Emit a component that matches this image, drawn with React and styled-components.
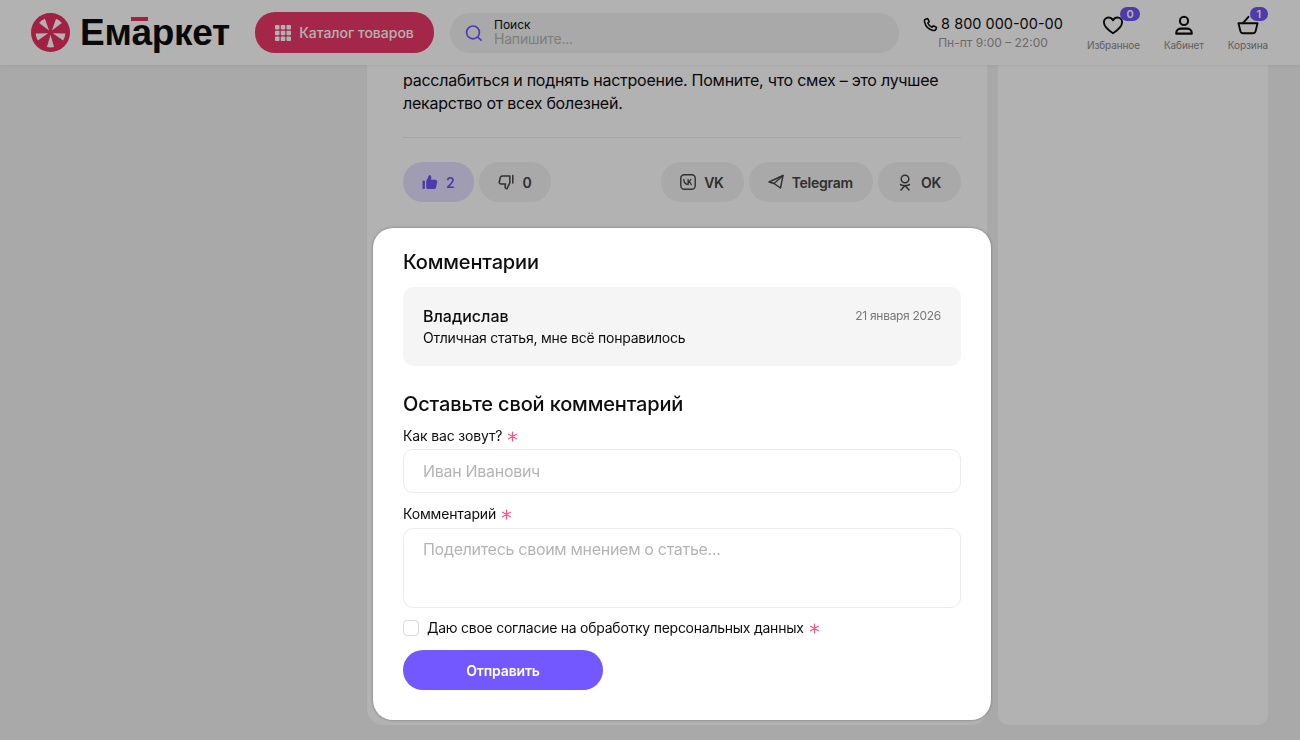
import styled, { createGlobalStyle } from "styled-components"
import { Fragment } from "react"

const Global = createGlobalStyle`
  * { box-sizing: border-box; }
  html, body { margin: 0; height: 100%; overflow: hidden; }
  body {
    background: #f2f2f2;
    color: #0d0d0d;
    font-family: Inter, "Noto Sans", sans-serif;
  }
`

const Page = styled.div`
  position: relative;
  width: 1300px;
  height: 740px;
  overflow: hidden;
`
const Header = styled.header`
  height: 65px;
  background: #fff;
  display: flex;
  align-items: center;
  padding: 0 32px 0 31px;
  box-shadow: 0 1px 4px rgba(0, 0, 0, 0.06);
  position: relative;
  z-index: 2;
`
const Logo = styled.div`
  display: flex;
  align-items: center;
  gap: 10px;
  width: 224px;
  flex: none;
`
const LogoText = styled.span`
  font-family: "Liberation Sans", Arial, sans-serif;
  font-size: 37px;
  font-weight: 700;
  letter-spacing: -0.3px;
  line-height: 40px;
  color: #0d0d0d;
`
const LogoA = styled.span`
  position: relative;
  &::before {
    content: "";
    position: absolute;
    left: 0;
    right: 4px;
    top: 5px;
    height: 4px;
    background: #e8305f;
  }
`
const Catalog = styled.button`
  width: 179px;
  height: 41px;
  flex: none;
  border: 0;
  border-radius: 20px;
  background: #eb3869;
  color: #fff;
  display: flex;
  align-items: center;
  justify-content: center;
  gap: 8px;
  font: 500 14px Inter, sans-serif;
`
const Search = styled.div`
  width: 449px;
  height: 40px;
  flex: none;
  margin-left: 16px;
  border-radius: 20px;
  background: #f2f2f2;
  display: flex;
  align-items: center;
  gap: 11px;
  padding-left: 15px;
`
const SearchText = styled.div`
  display: flex;
  flex-direction: column;
  margin-top: -2px;
  font-size: 12px;
  line-height: 15px;
  span + span {
    font-size: 14px;
    line-height: 14px;
    letter-spacing: -0.2px;
    color: #b4b4b4;
  }
`
const Contact = styled.div`
  margin-left: 24px;
  width: 140px;
  flex: none;
  display: flex;
  flex-direction: column;
  align-items: center;
  gap: 2px;
`
const Phone = styled.div`
  display: flex;
  align-items: center;
  gap: 3px;
  font-size: 14.5px;
  line-height: 18px;
`
const Hours = styled.div`
  font-size: 12px;
  line-height: 15px;
  color: #999;
`
const Nav = styled.nav`
  margin-left: auto;
  display: flex;
  gap: 24px;
`
const NavItem = styled.div`
  position: relative;
  display: flex;
  flex-direction: column;
  align-items: center;
  gap: 4px;
  font-size: 10px;
  line-height: 12px;
  letter-spacing: -0.1px;
  color: #888;
`
const Badge = styled.span`
  position: absolute;
  top: -8px;
  left: ${p => p.$left}px;
  width: ${p => p.$width}px;
  height: 14px;
  border-radius: 7px;
  background: #6f55f2;
  color: #fff;
  font-size: 11px;
  font-weight: 600;
  line-height: 14px;
  text-align: center;
`

const Main = styled.main`
  display: grid;
  grid-template-columns: 620px 270px;
  gap: 11px;
  padding-left: 367px;
`
const Article = styled.article`
  height: 660px;
  background: #fff;
  border-radius: 0 0 16px 16px;
  padding: 0 26px 0 36px;
`
const Body = styled.p`
  margin: 0;
  padding-top: 4px;
  font-size: 16px;
  line-height: 23px;
  letter-spacing: -0.25px;
`
const Divider = styled.hr`
  border: 0;
  height: 1px;
  background: #ececec;
  margin: 22px 0 24px;
`
const Actions = styled.div`
  display: flex;
  gap: 5px;
`
const Chip = styled.div`
  height: 40px;
  padding: 0 20px 0 19px;
  border-radius: 20px;
  background: ${p => (p.$active ? "#e6e1ff" : "#f2f2f2")};
  color: ${p => (p.$active ? "#6f55f2" : "#444")};
  display: flex;
  align-items: center;
  gap: 8px;
  font-size: 14px;
  font-weight: 600;
  letter-spacing: -0.25px;
  &.push { margin-left: auto; }
`
const Sidebar = styled.aside`
  height: 660px;
  background: #fff;
  border-radius: 0 0 10px 10px;
`

const Overlay = styled.div`
  position: absolute;
  inset: 0;
  z-index: 5;
  background: rgba(0, 0, 0, 0.3);
  backdrop-filter: blur(0.5px);
`
const Modal = styled.section`
  position: absolute;
  left: 373px;
  top: 228px;
  width: 618px;
  height: 492px;
  padding: 22px 30px 0;
  background: #fff;
  border-radius: 20px;
  box-shadow: 0 0 3px rgba(0, 0, 0, 0.35);
`
const Title = styled.h2`
  margin: 0;
  font-size: 20px;
  line-height: 24px;
  font-weight: 500;
  letter-spacing: -0.15px;
`
const Comment = styled.div`
  margin: 13px 0 26px;
  height: 79px;
  padding: 18px 20px;
  border-radius: 10px;
  background: #f5f5f5;
`
const CommentTop = styled.div`
  display: flex;
  justify-content: space-between;
  font-size: 16px;
  line-height: 22px;
  font-weight: 500;
  time {
    font-size: 12px;
    font-weight: 400;
    line-height: 22px;
    letter-spacing: -0.3px;
    color: #777;
  }
`
const CommentText = styled.div`
  font-size: 14px;
  line-height: 22px;
  letter-spacing: -0.25px;
`
const Label = styled.label`
  display: flex;
  align-items: center;
  gap: 5px;
  margin-top: ${p => p.$top || 0}px;
  font-size: 14px;
  line-height: 20px;
  letter-spacing: -0.15px;
`
const Field = styled.input`
  display: block;
  width: 100%;
  height: 44px;
  margin-top: 3px;
  padding: 0 19px;
  border: 1px solid #ececec;
  border-radius: 10px;
  outline: 0;
  font: 400 16px Inter, sans-serif;
  letter-spacing: -0.3px;
  &::placeholder { color: #b4b4b4; opacity: 1; }
`
const Area = styled.textarea`
  display: block;
  width: 100%;
  height: 80px;
  margin-top: 4px;
  padding: 9px 19px;
  border: 1px solid #ececec;
  border-radius: 10px;
  outline: 0;
  resize: none;
  font: 400 16px/22px Inter, sans-serif;
  letter-spacing: -0.3px;
  &::placeholder { color: #b4b4b4; opacity: 1; }
`
const Consent = styled.div`
  display: flex;
  align-items: center;
  gap: 8px;
  margin-top: 10px;
  font-size: 14px;
  line-height: 20px;
  letter-spacing: -0.25px;
  svg { margin-left: -3px; }
`
const Box = styled.span`
  width: 16px;
  height: 16px;
  flex: none;
  border: 1px solid #d9d9d9;
  border-radius: 4px;
`
const Send = styled.button`
  display: block;
  width: 200px;
  height: 40px;
  margin-top: 12px;
  border: 0;
  border-radius: 20px;
  background: #7357ff;
  color: #fff;
  font: 600 14px Inter, sans-serif;
  letter-spacing: -0.15px;
`

const Star = () => (
  <svg width="11" height="11" viewBox="0 0 11 11" stroke="#f8527f" strokeWidth="1.2" strokeLinecap="round">
    <path d="M5.5 1v9M1.6 3.2l7.8 4.6M9.4 3.2L1.6 7.8" />
  </svg>
)

const LogoMark = () => (
  <svg width="39" height="39" viewBox="0 0 40 40">
    <circle cx="20" cy="20" r="20" fill="#e8305f" />
    <g fill="#fff">
      {[0, 72, 144, 216, 288].map(a => (
        <path key={a} d="M20 17.5L16.3 5.2a14.8 14.8 0 0 1 7.4 0z" transform={`rotate(${a + 36} 20 20)`} />
      ))}
    </g>
  </svg>
)

const Grid = () => (
  <svg width="16" height="16" viewBox="0 0 16 16" fill="#fff">
    {[0, 1, 2].map(r => [0, 1, 2].map(c => <rect key={`${r}${c}`} x={c * 5.75} y={r * 5.75} width="4.5" height="4.5" rx="0.8" />))}
  </svg>
)

const SearchIcon = () => (
  <svg width="18" height="18" viewBox="0 0 18 18" fill="none" stroke="#7357ff" strokeWidth="1.7" strokeLinecap="round">
    <circle cx="8" cy="8.4" r="6.4" />
    <path d="M13 13.4l3 2.8" />
  </svg>
)

const PhoneIcon = () => (
  <svg width="15" height="15" viewBox="0 0 24 24" fill="none" stroke="#0d0d0d" strokeWidth="2.4" strokeLinejoin="round">
    <path d="M7.5 2.5L4 3.5C2.5 4 2 6 2.5 8c1.5 6.5 7 12 13.5 13.5 2 .5 4-.2 4.7-1.7l1-3.3-5.2-2.5-2 2.3c-2.8-1-5.8-4-6.8-6.8l2.3-2z" />
  </svg>
)

const Heart = () => (
  <svg width="22" height="20" viewBox="0 0 23 22" fill="none" stroke="#0d0d0d" strokeWidth="2.1" strokeLinejoin="round">
    <path d="M11.5 20C6 16.5 1.5 13 1.5 8c0-3.2 2.3-5.2 5-5.2 2 0 3.8 1 5 3 1.2-2 3-3 5-3 2.7 0 5 2 5 5.2 0 5-4.5 8.500-10 12z" />
  </svg>
)

const User = () => (
  <svg width="20" height="20" viewBox="0 0 22 22" fill="none" stroke="#0d0d0d" strokeWidth="2.3">
    <circle cx="11" cy="6.5" r="4.5" />
    <path d="M2.5 20.500v-1c0-2.800 2.500-4.500 5-4.500h7c2.500 0 5 1.700 5 4.500v1z" strokeLinejoin="round" />
  </svg>
)

const Basket = () => (
  <svg width="22" height="20" viewBox="0 0 24 22" fill="none" stroke="#0d0d0d" strokeWidth="2.1" strokeLinejoin="round" strokeLinecap="round">
    <path d="M1.5 9h21l-2.300 9.300c-.3 1.200-1.300 1.700-2.400 1.700H6.200c-1.100 0-2.100-.5-2.400-1.700z" />
    <path d="M6.500 9l6-7" />
  </svg>
)

const ThumbUp = () => (
  <svg width="16" height="16" viewBox="0 0 16 16" fill="#6f55f2">
    <rect x="0.5" y="6.5" width="2.4" height="8.5" rx="0.8" />
    <path d="M4.200 7l3-6c1.400 0 2.300 1 2.100 2.400L9 5.800h4.300c1.300 0 2.200 1.200 1.900 2.400l-1.200 5.200c-.3 1-1.100 1.600-2.100 1.600H6c-1 0-1.800-.8-1.800-1.800z" />
  </svg>
)

const ThumbDown = () => (
  <svg width="16" height="16" viewBox="0 0 16 16" fill="none" stroke="#444" strokeWidth="1.5" strokeLinejoin="round" strokeLinecap="round">
    <path d="M14.800 1.500v7.500" />
    <path d="M11.800 8.800L8.900 14.800c-1.200 0-2-1-1.800-2.200l.4-2.600H3c-1.100 0-1.900-1-1.700-2l1-4.500c.2-1 1-1.500 1.900-1.500h7.600z" />
  </svg>
)

const VkIcon = () => (
  <svg width="16" height="16" viewBox="0 0 16 16" fill="none" stroke="#444" strokeLinecap="round" strokeLinejoin="round">
    <rect x="0.8" y="0.8" width="14.4" height="14.4" rx="3.5" strokeWidth="1.4" />
    <path d="M3.800 5.400c.2 3 1.700 5 4.300 5.200V5.400M8.100 7.900c1.300-.2 2.300-1.200 2.700-2.500M8.100 7.900c1.500.2 2.700 1.200 3.200 2.700" strokeWidth="1.3" />
  </svg>
)

const PlaneIcon = () => (
  <svg width="16" height="16" viewBox="0 0 16 16" fill="none" stroke="#444" strokeWidth="1.4" strokeLinejoin="round" strokeLinecap="round">
    <path d="M15 1.500L1 8l5 1.500L12.500 14z" />
    <path d="M15 1.500L6 9.500" />
  </svg>
)

const OkIcon = () => (
  <svg width="16" height="17" viewBox="0 0 16 17" fill="none" stroke="#444" strokeWidth="1.5" strokeLinecap="round" strokeLinejoin="round">
    <circle cx="8" cy="5" r="3.8" />
    <path d="M3.500 10.500c2.800 1.600 6.200 1.600 9 0M8 11.500l-4 4.500M8 11.500l4 4.500" />
  </svg>
)

export default function App() {
  return (
    <Fragment>
      <Global />
      <Page>
        <Header>
          <Logo>
            <LogoMark />
            <LogoText>Ем<LogoA>а</LogoA>ркет</LogoText>
          </Logo>
          <Catalog><Grid />Каталог товаров</Catalog>
          <Search>
            <SearchIcon />
            <SearchText>
              <span>Поиск</span>
              <span>Напишите...</span>
            </SearchText>
          </Search>
          <Contact>
            <Phone><PhoneIcon />8 800 000-00-00</Phone>
            <Hours>Пн-пт 9:00 – 22:00</Hours>
          </Contact>
          <Nav>
            <NavItem><Heart />Избранное<Badge $left={33} $width={20}>0</Badge></NavItem>
            <NavItem><User />Кабинет</NavItem>
            <NavItem><Basket />Корзина<Badge $left={22} $width={18}>1</Badge></NavItem>
          </Nav>
        </Header>
        <Main>
          <Article>
            <Body>
              расслабиться и поднять настроение. Помните, что смех – это лучшее
              <br />
              лекарство от всех болезней.
            </Body>
            <Divider />
            <Actions>
              <Chip $active><ThumbUp />2</Chip>
              <Chip><ThumbDown />0</Chip>
              <Chip className="push"><VkIcon />VK</Chip>
              <Chip><PlaneIcon />Telegram</Chip>
              <Chip><OkIcon />OK</Chip>
            </Actions>
          </Article>
          <Sidebar />
        </Main>
        <Overlay>
          <Modal>
            <Title>Комментарии</Title>
            <Comment>
              <CommentTop>Владислав<time>21 января 2026</time></CommentTop>
              <CommentText>Отличная статья, мне всё понравилось</CommentText>
            </Comment>
            <Title>Оставьте свой комментарий</Title>
            <Label $top={10}>Как вас зовут? <Star /></Label>
            <Field placeholder="Иван Иванович" readOnly />
            <Label $top={11}>Комментарий <Star /></Label>
            <Area placeholder="Поделитесь своим мнением о статье..." readOnly />
            <Consent><Box />Даю свое согласие на обработку персональных данных <Star /></Consent>
            <Send>Отправить</Send>
          </Modal>
        </Overlay>
      </Page>
    </Fragment>
  )
}
